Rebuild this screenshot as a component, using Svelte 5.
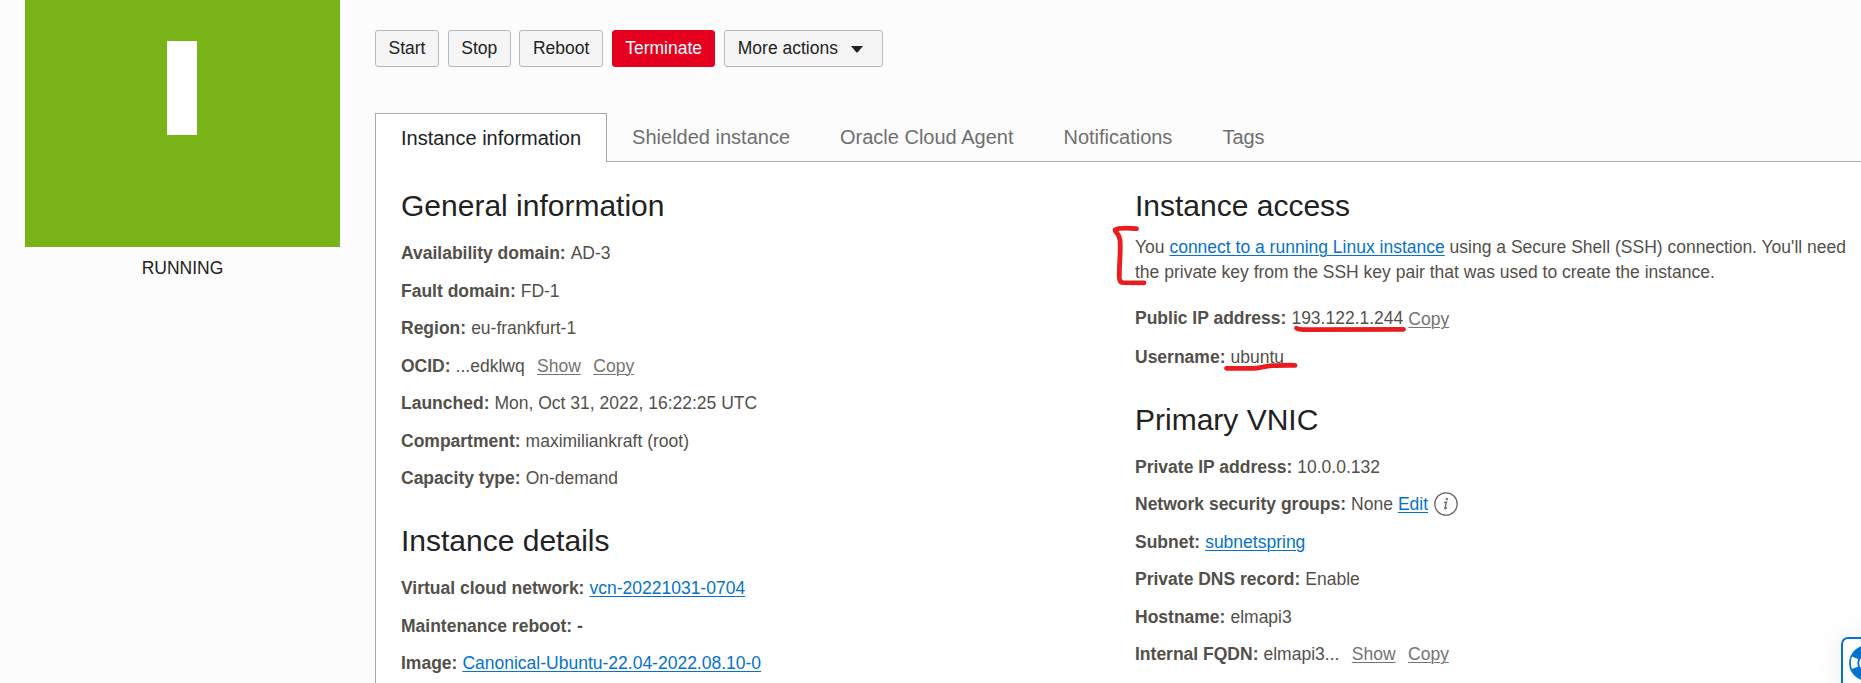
<script>
  const actions = ['Start', 'Stop', 'Reboot'];
  const tabs = ['Instance information', 'Shielded instance', 'Oracle Cloud Agent', 'Notifications', 'Tags'];
  const general = [
    { label: 'Availability domain:', value: 'AD-3' },
    { label: 'Fault domain:', value: 'FD-1' },
    { label: 'Region:', value: 'eu-frankfurt-1' },
    { label: 'OCID:', value: '...edklwq', tools: true },
    { label: 'Launched:', value: 'Mon, Oct 31, 2022, 16:22:25 UTC' },
    { label: 'Compartment:', value: 'maximiliankraft (root)' },
    { label: 'Capacity type:', value: 'On-demand' }
  ];
  const details = [
    { label: 'Virtual cloud network:', link: 'vcn-20221031-0704' },
    { label: 'Maintenance reboot: -' },
    { label: 'Image:', link: 'Canonical-Ubuntu-22.04-2022.08.10-0' }
  ];
  const vnic = [
    { label: 'Private IP address:', value: '10.0.0.132' },
    { label: 'Network security groups:', value: 'None', link: 'Edit', info: true },
    { label: 'Subnet:', link: 'subnetspring' },
    { label: 'Private DNS record:', value: 'Enable' },
    { label: 'Hostname:', value: 'elmapi3' },
    { label: 'Internal FQDN:', value: 'elmapi3...', tools: true }
  ];
</script>

{#snippet rows(items)}
  {#each items as item}
    <div class="row">
      <b>{item.label}</b>
      {#if item.value}<span>{item.value}</span>{/if}
      {#if item.link}<a class="link" href="#top">{item.link}</a>{/if}
      {#if item.info}
        <svg class="info" viewBox="0 0 24 24" width="24" height="24">
          <circle cx="12" cy="12" r="11.2" fill="none" stroke="#6b6763" stroke-width="1.3" />
          <circle cx="12.9" cy="7.1" r="1.2" fill="#6b6763" />
          <path d="M10 10.6l2.5-.5-1.6 6c-.2 1 .7.8 1.9-.6" fill="none" stroke="#6b6763" stroke-width="1.4" />
        </svg>
      {/if}
      {#if item.tools}
        <a class="tool first" href="#top">Show</a>
        <a class="tool next" href="#top">Copy</a>
      {/if}
    </div>
  {/each}
{/snippet}

<div class="page">
  <aside>
    <div class="status"><div class="letter"></div></div>
    <div class="state">RUNNING</div>
  </aside>

  <main>
    <div class="actions">
      {#each actions as action}
        <button>{action}</button>
      {/each}
      <button class="danger">Terminate</button>
      <button class="more">More actions
        <svg width="12" height="7" viewBox="0 0 12 7"><path d="M0 0h12L6.8 6.2q-.8.8-1.6 0z" fill="#222" /></svg>
      </button>
    </div>

    <nav>
      {#each tabs as tab, i}
        <div class="tab" class:active={i === 0}>{tab}</div>
      {/each}
    </nav>

    <div class="panel">
      <section>
        <h2>General information</h2>
        {@render rows(general)}
        <h2 class="later">Instance details</h2>
        {@render rows(details)}
      </section>
      <section>
        <h2 class="tight">Instance access</h2>
        <p>You <a class="link" href="#top">connect to a running Linux instance</a> using a Secure Shell (SSH) connection. You'll need the private key from the SSH key pair that was used to create the instance.</p>
        <div class="row wide"><b>Public IP address:</b><span class="ip">193.122.1.244</span><a class="tool low" href="#top">Copy</a></div>
        <div class="row"><b>Username:</b><span>ubuntu</span></div>
        <h2 class="later vnic">Primary VNIC</h2>
        {@render rows(vnic)}
      </section>
    </div>
  </main>

  <svg class="marks" width="310" height="160" viewBox="1100 220 310 160">
    <path d="M1136.5 228.7C1128 228 1118 228 1115 230C1116 233 1119.500 234 1120 240C1121 252 1119 265 1119.300 277Q1119.300 282.500 1123 282.700L1144 282.800" />
    <path d="M1296.500 328.200Q1299 329.700 1304 329.600L1403.500 329.300" />
    <path d="M1226.500 368.300L1254 368.300C1262 368 1264 366 1272 365.700S1285 365 1295 365.400" />
  </svg>

  <div class="help">
    <svg width="36" height="36" viewBox="0 0 36 36">
      <circle cx="18" cy="18" r="12.500" fill="none" stroke="#0572ce" stroke-width="9" stroke-dasharray="9.820 9.820" stroke-dashoffset="4.910" transform="rotate(45 18 18)" />
      <circle cx="18" cy="18" r="17" fill="none" stroke="#0572ce" stroke-width="1.700" />
      <circle cx="18" cy="18" r="8.800" fill="#fff" stroke="#0572ce" stroke-width="1.900" />
    </svg>
  </div>
</div>

<style>
  :global(body) { overflow: hidden; background: #fcfcfc; }
  .page {
    position: relative;
    display: flex;
    width: 1861px;
    height: 683px;
    overflow: hidden;
    background: #fcfcfc;
    color: #534f4a;
    font: 17.5px/25px "Liberation Sans", Arial, sans-serif;
  }
  aside { flex: none; width: 315px; margin-left: 25px; }
  .status { display: flex; justify-content: center; height: 247px; background: #78b317; }
  .letter { width: 30px; height: 94px; margin: 41px 1px 0 0; background: #fff; }
  .state { padding-top: 9px; color: #222; text-align: center; }
  main { flex: none; width: 1500px; margin-left: 35px; }
  .actions { display: flex; gap: 8.750px; padding-top: 30px; }
  button {
    display: flex;
    align-items: center;
    box-sizing: border-box;
    height: 37px;
    padding: 0 12.500px;
    border: 1px solid #b4b9c1;
    border-radius: 3px;
    background: #f5f5f5;
    color: #222;
    font: inherit;
    white-space: nowrap;
  }
  .danger { padding-right: 12px; border-color: #e6001f; background: #e6001f; color: #fff; }
  .more { gap: 13px; margin-left: .5px; padding-right: 19px; }
  .more svg { margin-top: 1px; }
  nav { display: flex; height: 49px; margin-top: 46px; background: linear-gradient(#a9a9a9, #a9a9a9) bottom / 100% 1px no-repeat; }
  .tab { padding: 12px 25px 0; color: #6f6f6f; font-size: 20px; line-height: 25px; }
  .tab.active { height: 36px; padding: 12px 25px 0; border: 1px solid #a9a9a9; border-bottom: 0; background: #fff; color: #222; }
  .panel { display: flex; height: 521px; padding: 25px 0 0 25px; border-left: 1px solid #a9a9a9; background: #fff; }
  section { flex: none; width: 734px; }
  h2 { margin: 0 0 16.500px; color: #222; font-size: 30px; font-weight: 400; line-height: 37.500px; }
  .tight { margin-bottom: 10.750px; }
  .later { margin-top: 31.250px; margin-bottom: 16.300px; }
  .vnic { margin-top: 30.750px; margin-bottom: 16px; }
  p { width: 715px; margin: 0 0 21px; }
  .row { display: flex; gap: 5px; height: 25px; margin-bottom: 12.500px; white-space: nowrap; }
  .row:has(+ .later) { margin-bottom: 0; }
  .wide { margin-bottom: 14px; }
  .link { color: #0572ce; }
  a { text-decoration: underline; text-decoration-thickness: 1px; text-underline-offset: 2px; }
  .tool { color: #767370; }
  .first { margin-left: 7.400px; }
  .next { margin-left: 7.500px; }
  .low { position: relative; top: 1px; }
  .info { flex: none; margin: 0 0 0 .5px; }
  .marks { position: absolute; left: 1100px; top: 220px; fill: none; stroke: #e91c1e; stroke-width: 4.800; stroke-linecap: round; stroke-linejoin: round; }
  .help {
    position: absolute;
    left: 1841px;
    top: 637px;
    box-sizing: border-box;
    width: 52px;
    height: 60px;
    padding: 6px;
    border: 2px solid #0572ce;
    border-radius: 7px;
    background: #fff;
    box-shadow: 0 0 30px rgba(0, 0, 0, .08);
  }
</style>
